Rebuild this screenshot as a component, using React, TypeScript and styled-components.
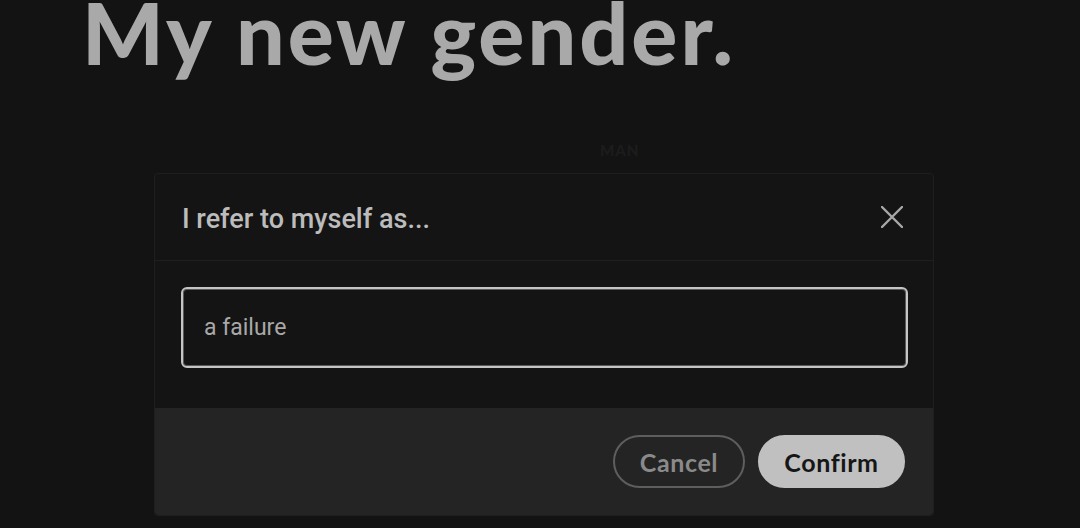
import React from "react";
import styled, { createGlobalStyle } from "styled-components";

const Global = createGlobalStyle`
  html, body { margin: 0; padding: 0; background: #131313; }
  body { width: 1080px; height: 528px; overflow: hidden; }
`;

const Page = styled.div`
  width: 1080px;
  height: 528px;
  background: #131313;
  display: flex;
  flex-direction: column;
  overflow: hidden;
`;

const Title = styled.h1`
  margin: 0;
  padding: 0 0 0 82px;
  height: 64px;
  font-family: Lato, "Noto Sans", sans-serif;
  font-weight: 900;
  font-size: 86px;
  line-height: 64px;
  color: #a9a9a9;
  letter-spacing: 3px;
  white-space: nowrap;
`;

const Ghost = styled.div`
  padding-left: 600px;
  margin-top: 76px;
  height: 33px;
  line-height: 20px;
  font-family: Lato, sans-serif;
  font-weight: 900;
  font-size: 15px;
  color: #1c1c1c;
  letter-spacing: 1px;
`;

const Modal = styled.div`
  margin-left: 154px;
  width: 778px;
  border: 1px solid #1f1f1f;
  border-radius: 4px;
  background: #141414;
  display: flex;
  flex-direction: column;
`;

const Header = styled.div`
  height: 86px;
  padding: 0 29px 0 27px;
  display: flex;
  align-items: center;
  justify-content: space-between;
  border-bottom: 1px solid #1f1f1f;
`;

const HeaderText = styled.div`
  font-family: Roboto, "Noto Sans", sans-serif;
  font-size: 27px;
  font-weight: 500;
  color: #bcbcbc;
  padding-top: 4px;
`;

const Close = styled.button`
  background: none;
  border: 0;
  padding: 0;
  width: 24px;
  height: 24px;
  display: flex;
  align-items: center;
  justify-content: center;
  cursor: pointer;
`;

const Body = styled.div`
  padding: 26px 25px 40px 26px;
`;

const Input = styled.div`
  height: 77px;
  border: 2px solid #c4c4c4;
  box-shadow: inset 0 0 0 1px #5a5a5a;
  border-radius: 6px;
  display: flex;
  align-items: center;
  padding-left: 21px;
  font-family: Roboto, "Noto Sans", sans-serif;
  font-size: 23px;
  color: #a8a8a8;
`;

const Footer = styled.div`
  height: 107px;
  background: #242424;
  border-radius: 0 0 4px 4px;
  display: flex;
  align-items: center;
  justify-content: flex-end;
  gap: 13px;
  padding-right: 28px;
`;

const Btn = styled.button<{ $primary?: boolean }>`
  height: 53px;
  width: ${(p) => (p.$primary ? "147px" : "132px")};
  border-radius: 27px;
  border: 2px solid ${(p) => (p.$primary ? "#c0c0c0" : "#5e5e5e")};
  background: ${(p) => (p.$primary ? "#c0c0c0" : "transparent")};
  color: ${(p) => (p.$primary ? "#161616" : "#8a8a8a")};
  font-family: Lato, "Noto Sans", sans-serif;
  font-weight: 700;
  font-size: 25px;
  letter-spacing: 0.6px;
  padding: 0;
  cursor: pointer;
`;

export default function App() {
  return (
    <Page>
      <Global />
      <Title>My new gender.</Title>
      <Ghost>MAN</Ghost>
      <Modal>
        <Header>
          <HeaderText>I refer to myself as...</HeaderText>
          <Close aria-label="Close">
            <svg width="22" height="22" viewBox="0 0 22 22">
              <path d="M1 1 L21 21 M21 1 L1 21" stroke="#a8a8a8" strokeWidth="2.4" strokeLinecap="round" />
            </svg>
          </Close>
        </Header>
        <Body>
          <Input>a failure</Input>
        </Body>
        <Footer>
          <Btn>Cancel</Btn>
          <Btn $primary>Confirm</Btn>
        </Footer>
      </Modal>
    </Page>
  );
}
